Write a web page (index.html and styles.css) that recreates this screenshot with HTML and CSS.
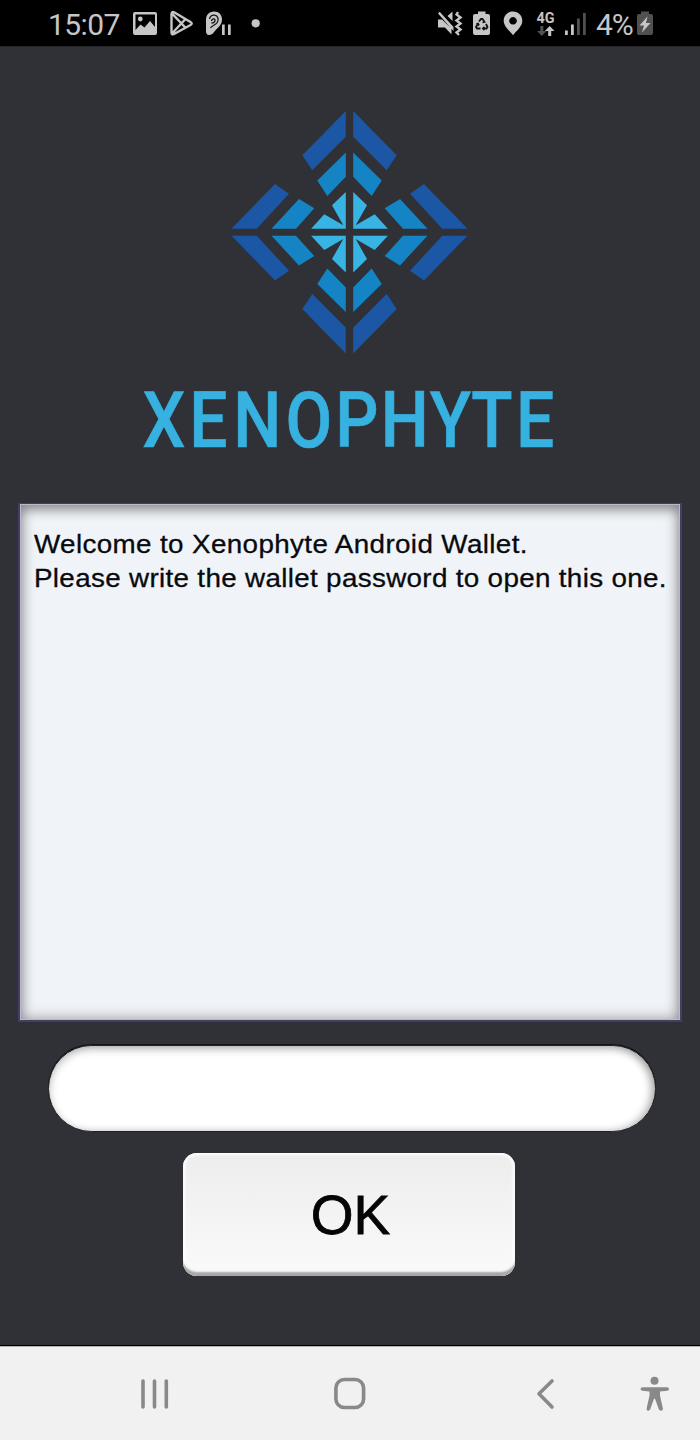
FILE: index.html
```html
<!DOCTYPE html>
<html lang="en">
<head>
<meta charset="utf-8">
<title>Xenophyte Wallet</title>
<link rel="stylesheet" href="styles.css">
</head>
<body>
<header class="status">
  <span class="clock">15:07</span>
  <svg class="status-left" width="132" height="46" viewBox="130 0 132 46">
    <path fill-rule="evenodd" d="M135 12h20q2 0 2 2v19q0 2-2 2h-20q-2 0-2-2V14q0-2 2-2zm.5 2.500v15.500l5-5.500 4 3 5.500-6.500 5 6v-12.500z"/>
    <circle cx="140.300" cy="19" r="2.400"/>
    <path class="line" d="M171.500 14.500v18q0 3 3 1.300l16-8.800q2.500-1.500 0-3l-16-9.500q-3-1.500-3 2zM172 13.500l13.500 14.300M172 33.500l13.500-14.500"/>
    <path d="M214 11.500c5 0 8 3.500 8 8 0 6-5 8.500-7.500 12-1.500 2.500-3.500 3.500-5.500 3.500-2.300 0-3-2-3-4V20c0-5 3-8.500 8-8.500z"/>
    <path class="ear" d="M209.500 19c.5-3 3-4.300 5.200-3.800 3.500.7 4.300 4.300 2.500 7.300-1.800 2.700-5 2.800-6.700 5.500M211.500 21c.5-2.500 3.500-3 3.500-.7s-2.500 2.700-3.500 2.700"/>
    <path d="M222 24.500h2.700V35H222zM228 24.500h2.700V35H228z"/>
    <circle cx="255.700" cy="23.300" r="4.100"/>
  </svg>
  <svg class="status-right" width="155" height="46" viewBox="436 0 155 46">
    <path d="M438 19.500h4l9.500 9v6l-6.500-7h-7zM438 13.500l1.700-1.700L453.500 27v4zM447.500 16l5-4.500v9.500z"/>
    <path class="line" d="M458 12l-1.500 2.500 4 3-4 3 4 3-4 3 4 3-4 3L459 35"/>
    <path d="M478 11.500h7.500V14h2.500q2 0 2 2v17q0 2-2 2h-13q-2 0-2-2V16q0-2 2-2h3z"/>
    <path class="recycle" d="M479 21.500l2-2.500h1.500l2 3M486 24l1.500 3-1 1.500h-3.500M480.500 28.500h-3.500l-1-1.500 2-3.500M483.500 20.500l1 1.500-2 .5M484.500 27l-1.500 1.500 1.500 1.500M476.500 24l1.500-.5 1 2"/>
    <path fill-rule="evenodd" d="M513 11.500c5.300 0 9.300 4 9.300 9.200 0 6-6.300 10.300-9.300 14.600-3-4.300-9.300-8.600-9.300-14.600 0-5.200 4-9.200 9.300-9.200zm0 5.500a3.800 3.800 0 1 0 .01 0z"/>
    <text class="network" x="536.500" y="23" textLength="18" lengthAdjust="spacingAndGlyphs">4G</text>
    <path class="dim" d="M540.300 26h3v5h3.200l-4.700 5-4.700-5h3.200z"/>
    <path d="M548.200 36h3v-5h3.300l-4.800-5-4.800 5h3.300z"/>
    <path d="M565 30.500h2.800V35H565zM571 24.500h2.800V35H571z"/>
    <path class="dim" d="M577 18.500h2.800V35H577zM583 13h2.800v22H583z"/>
  </svg>
  <span class="percent">4%</span>
  <svg class="battery" width="16" height="46" viewBox="637 0 16 46">
    <path class="dim" d="M641 11.500h8V14h2q2 0 2 2v17q0 2-2 2h-12q-2 0-2-2V16q0-2 2-2h2z"/>
    <path d="M647.500 16.500l-8 9h4.500l-2 7 8.500-9.500H646z"/>
  </svg>
</header>
<main class="app">
  <svg class="logo" width="430" height="380" viewBox="135 100 430 380" role="img" aria-label="Xenophyte">
    <defs>
      <g id="quadrant">
        <path class="deep" d="M345.800 111v25.700L312.300 170.300l-10-15zM231.500 228.700L275 184l14 9.700-32.300 35z"/>
        <path class="mid" d="M345.800 152.500v24.300L327.300 196l-10-15.500zM271.500 228.700L299 199l15.300 9.300-18.300 20.400z"/>
        <path class="light" d="M345.800 192v36.700h-34.700l13.200-14.400 19 11-11.300-20z"/>
      </g>
    </defs>
    <use href="#quadrant"/>
    <use href="#quadrant" transform="matrix(-1 0 0 1 699 0)"/>
    <use href="#quadrant" transform="matrix(1 0 0 -1 0 464.400)"/>
    <use href="#quadrant" transform="matrix(-1 0 0 -1 699 464.400)"/>
    <text class="wordmark" transform="scale(.88 1)" y="447.300" x="186.300 236.800 292.400 351.100 405.400 459.900 511.900 559.100 608.200">XENOPHYTE</text>
  </svg>
  <section class="message">
    <p class="first">Welcome to Xenophyte Android Wallet.</p>
    <p class="second">Please write the wallet password to open this one.</p>
  </section>
  <input class="password" type="password" aria-label="Wallet password">
  <button class="ok">OK</button>
</main>
<nav class="nav">
  <svg width="700" height="94" viewBox="0 1346 700 94">
    <g class="stroke">
      <path d="M143 1381v26M154.500 1381v26M166.300 1381v26"/>
      <rect x="335.900" y="1379.500" width="27.700" height="28" rx="8.500"/>
      <path d="M552 1381l-13 12.700 13 13.300"/>
    </g>
    <g class="person">
      <circle cx="654.500" cy="1380.700" r="4"/>
      <path d="M642.400 1387.200h24.800q1.800 0 1.800 1.800t-1.800 1.800l-7.200.7v4l3 13.500q-1.500 3.300-4 .7l-4-11h-1l-4 11q-2.500 2.600-3.500-.7l3-13.500v-4l-7.100-.7q-1.800 0-1.800-1.800t1.800-1.800z"/>
    </g>
  </svg>
</nav>
</body>
</html>
```
FILE: styles.css
```css
* { box-sizing: border-box; }
body {
  margin: 0;
  width: 700px;
  height: 1440px;
  display: flex;
  flex-direction: column;
  background: #303136;
  font-family: "Liberation Sans", Arial, sans-serif;
}
svg { display: block; flex: none; }
.status {
  height: 47px;
  display: flex;
  padding-left: 48px;
  background: #000;
  border-bottom: 1px solid #29272c;
  color: #c6c6c6;
  fill: #c6c6c6;
  font: 30px/49px Roboto, sans-serif;
}
.clock { width: 82px; letter-spacing: -.6px; }
.status-right { margin-left: 174px; }
.percent { width: 46px; padding-left: 5px; letter-spacing: -1px; }
.line { fill: none; stroke: #c6c6c6; stroke-width: 2.4; }
.ear { fill: none; stroke: #111; stroke-width: 1.3; }
.recycle { fill: none; stroke: #111; stroke-width: 1.8; }
.dim { fill: #505050; }
.network { font: 700 14px Roboto, sans-serif; }
.app {
  flex: 1;
  display: flex;
  flex-direction: column;
  align-items: center;
  padding-top: 53px;
}
.deep { fill: #1b57a5; }
.mid { fill: #1484c5; }
.light { fill: #38b4e4; }
.wordmark {
  fill: #36b1e0;
  stroke: #36b1e0;
  stroke-width: .6;
  font: 500 77px Roboto, sans-serif;
  text-anchor: middle;
}
.message {
  width: 664px;
  height: 519px;
  margin-top: 23px;
  padding: 23px 0 0 14px;
  border: solid #443d68;
  border-width: 1px 2px 2px;
  background: #f0f4f8;
  box-shadow: inset 0 0 0 1px #b9b9ca, inset 0 6px 12px rgba(0,0,0,.28), inset 0 0 13px 3px rgba(0,0,0,.28);
}
.message p {
  width: max-content;
  margin: 0;
  color: #080a0e;
  font-size: 25.5px;
  line-height: 34px;
  white-space: nowrap;
  transform: scaleX(1.09);
  transform-origin: left;
  -webkit-text-stroke: .3px #080a0e;
}
.first { letter-spacing: .34px; }
.second { letter-spacing: .3px; }
.password {
  width: 608px;
  height: 87px;
  margin: 23px 0 0 4px;
  padding: 0 40px;
  border: 1px solid #202124;
  border-radius: 44px;
  background: #fff;
  box-shadow: inset 0 3px 9px rgba(0,0,0,.25), inset -5px 0 8px -1px rgba(0,0,0,.22), 0 -1px 0 #151518;
  font-size: 28px;
}
.ok {
  width: 332px;
  height: 123px;
  margin: 21px 2px 0 0;
  padding: 0 0 0 3px;
  border: 0;
  border-radius: 14px;
  background: linear-gradient(#ededee, #fafafb);
  box-shadow: inset 0 -5px 2px -1px #a5a6a5, inset 0 0 3px 2px #fff;
  color: #050505;
  font: 55px/125px "Liberation Sans", Arial, sans-serif;
  -webkit-text-stroke: .8px #050505;
}
.nav {
  height: 95px;
  border-top: 1px solid #000;
  background: #f1f1f1;
  box-shadow: inset 0 1px #b5b5b5;
}
.stroke { fill: none; stroke: #898989; stroke-width: 3.6; stroke-linecap: round; stroke-linejoin: round; }
.person { fill: #898989; }
```
